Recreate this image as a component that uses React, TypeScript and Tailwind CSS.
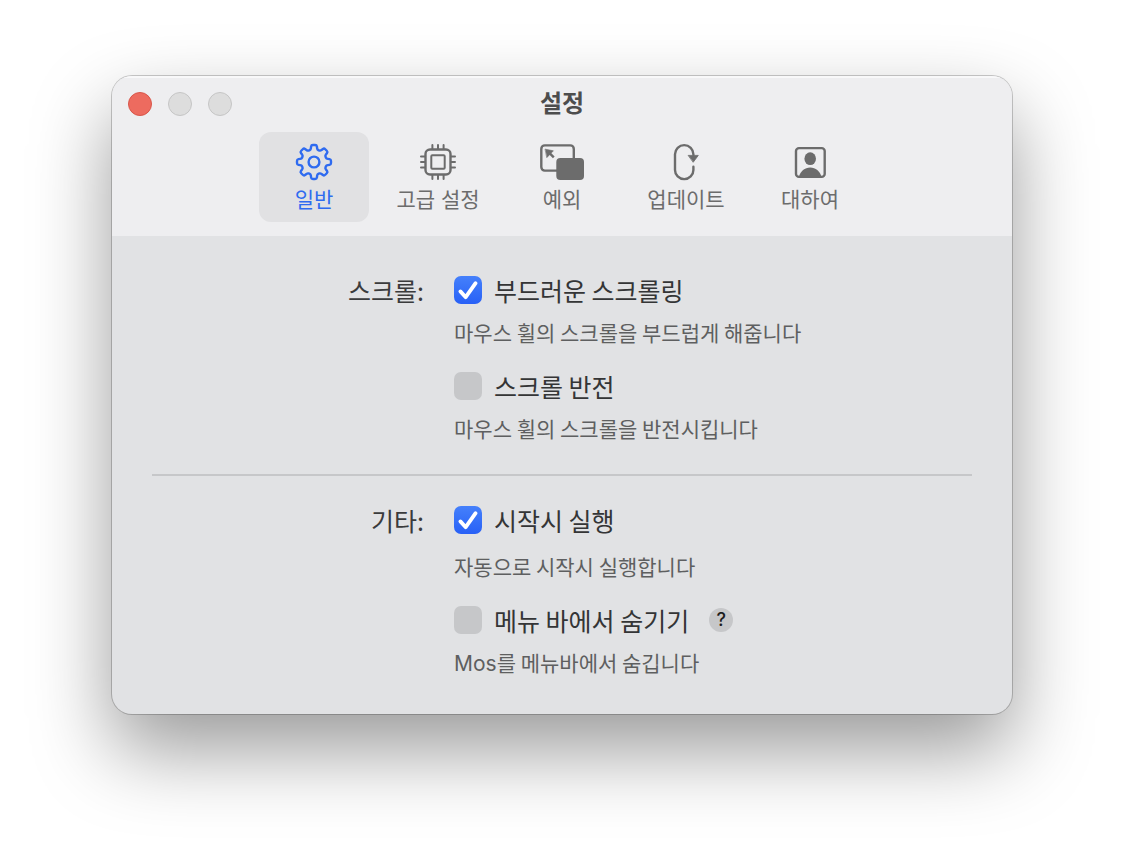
import { useState, type ReactNode } from "react";

// Outline of an eight-tooth gear with softened corners
function gearPath(cx: number, cy: number) {
  const points: [number, number][] = [];
  for (let tooth = 0; tooth < 8; tooth++) {
    for (const [radius, offset] of [
      [17.2, -9],
      [17.2, 9],
      [12.8, 15],
      [12.8, 30],
    ]) {
      const angle = ((tooth * 45 + offset - 90) * Math.PI) / 180;
      points.push([
        cx + radius * Math.cos(angle),
        cy + radius * Math.sin(angle),
      ]);
    }
  }
  const mix = (a: [number, number], b: [number, number], t: number) =>
    `${(a[0] + (b[0] - a[0]) * t).toFixed(2)} ${(a[1] + (b[1] - a[1]) * t).toFixed(2)}`;
  const parts = points.map((point, i) => {
    const prev = points[(i + points.length - 1) % points.length];
    const next = points[(i + 1) % points.length];
    return `${i === 0 ? "M" : "L"}${mix(point, prev, 0.3)}Q${point[0].toFixed(2)} ${point[1].toFixed(2)} ${mix(point, next, 0.3)}`;
  });
  return parts.join("") + "Z";
}

function TabIcon({ children }: { children: ReactNode }) {
  return (
    <svg
      className="h-10 w-12"
      viewBox="0 0 48 40"
      fill="none"
      stroke="currentColor"
      strokeWidth="2.4"
      strokeLinecap="round"
      strokeLinejoin="round"
      aria-hidden="true"
    >
      {children}
    </svg>
  );
}

const TABS = [
  {
    id: "general",
    label: "일반",
    icon: (
      <TabIcon>
        <path d={gearPath(24, 20)} />
        <circle cx="24" cy="20" r="5.4" />
      </TabIcon>
    ),
  },
  {
    id: "advanced",
    label: "고급 설정",
    icon: (
      <TabIcon>
        <rect x="11.5" y="7.5" width="25" height="25" rx="4.5" />
        <rect x="17.3" y="13.3" width="13.4" height="13.4" rx="1" strokeWidth="2" />
        <path
          d="M18.4 3v4M24 3v4M29.6 3v4M18.4 33v4M24 33v4M29.6 33v4M7 14.4h4M7 20h4M7 25.6h4M37 14.4h4M37 20h4M37 25.6h4"
          strokeWidth="2"
        />
      </TabIcon>
    ),
  },
  {
    id: "exceptions",
    label: "예외",
    icon: (
      <TabIcon>
        <rect x="3.3" y="3.4" width="32.5" height="25.2" rx="3.5" />
        <rect x="18.3" y="15.9" width="27.7" height="22" rx="4" fill="currentColor" stroke="none" />
        <path d="M7.4 7.2l8 1.6-6.4 6.6z" fill="currentColor" strokeWidth="0.6" />
        <path d="M10.5 10.2l5.3 5.2" strokeLinecap="butt" />
      </TabIcon>
    ),
  },
  {
    id: "update",
    label: "업데이트",
    icon: (
      <TabIcon>
        <path d="M31.4 13v-.7a9.2 9.2 0 0 0-18.4 0v15.6a9.2 9.2 0 0 0 18.4 0v-3.2" />
        <path d="M26.5 13.4h9.8l-4.9 6.6z" fill="currentColor" strokeWidth="0.8" />
      </TabIcon>
    ),
  },
  {
    id: "about",
    label: "대하여",
    icon: (
      <TabIcon>
        <rect x="10" y="6.1" width="28.7" height="28.8" rx="3" />
        <ellipse cx="24.2" cy="16.7" rx="5.8" ry="6.4" fill="currentColor" stroke="none" />
        <path
          d="M12.8 35c1.6-5.6 6-9.4 11.4-9.4s9.8 3.8 11.4 9.4z"
          fill="currentColor"
          stroke="none"
        />
      </TabIcon>
    ),
  },
];

interface OptionProps {
  id: string;
  label: string;
  description: ReactNode;
  defaultChecked?: boolean;
  gap?: string;
  help?: boolean;
}

function Option({
  id,
  label,
  description,
  defaultChecked = false,
  gap = "gap-4",
  help = false,
}: OptionProps) {
  return (
    <div className={`flex flex-col ${gap}`}>
      <div className="flex h-7 items-center">
        <label htmlFor={id} className="flex items-center gap-3">
          <span className="grid h-7 w-7">
            <input
              id={id}
              type="checkbox"
              defaultChecked={defaultChecked}
              className="peer col-start-1 row-start-1 h-7 w-7 appearance-none rounded-[7px] bg-[#c6c7c9] checked:bg-linear-to-b checked:from-[#4580fb] checked:to-[#2860f6]"
            />
            <svg
              className="pointer-events-none col-start-1 row-start-1 hidden h-7 w-7 peer-checked:block"
              viewBox="0 0 28 28"
              fill="none"
              stroke="white"
              strokeWidth="3.8"
              strokeLinecap="round"
              strokeLinejoin="round"
              aria-hidden="true"
            >
              <path d="M6.4 15.4l5.3 5.8L21.6 7.2" />
            </svg>
          </span>
          <span className="text-[25px] leading-7 text-[#343536]">{label}</span>
        </label>
        {help && (
          <button
            type="button"
            aria-label="도움말"
            className="ml-5 flex h-6 w-6 items-center justify-center rounded-full bg-[#c6c7c9] font-['Inter',sans-serif] text-lg leading-6 font-medium text-[#1c1c1c]"
          >
            ?
          </button>
        )}
      </div>
      <p className="h-6 text-[21px] leading-6 text-[#5e5f60]">{description}</p>
    </div>
  );
}

function Section({ title, children }: { title: string; children: ReactNode }) {
  return (
    <section className="grid grid-cols-[272px_1fr] gap-x-[30px]">
      <h2 className="text-right text-[25px] leading-7 text-[#3a3b3c]">{title}</h2>
      <div className="flex flex-col gap-7">{children}</div>
    </section>
  );
}

export default function App() {
  const [active, setActive] = useState("general");

  return (
    <div className="min-h-screen bg-white px-28 pt-[76px] pb-28 font-['Noto_Sans_CJK_KR','Inter',sans-serif]">
      <main className="overflow-hidden rounded-[20px] bg-[#e1e2e4] shadow-[0_0_0_1px_rgba(0,0,0,0.2),0_36px_80px_rgba(0,0,0,0.4)]">
        <header className="bg-[#eeeef0] pb-[14px] font-['Inter','Noto_Sans_CJK_KR',sans-serif] shadow-[inset_0_2px_0_#f8f8f9]">
          {/* Title bar */}
          <div className="grid h-14 grid-cols-[1fr_auto_1fr] items-center px-4">
            <div className="flex gap-4">
              <button
                type="button"
                aria-label="닫기"
                className="h-6 w-6 rounded-full border border-[#d8564a] bg-[#ed6b5f]"
              />
              <button
                type="button"
                aria-label="최소화"
                className="h-6 w-6 rounded-full border border-[#c5c5c5] bg-[#dddddd]"
              />
              <button
                type="button"
                aria-label="확대"
                className="h-6 w-6 rounded-full border border-[#c5c5c5] bg-[#dddddd]"
              />
            </div>
            <h1 className="text-2xl leading-8 font-bold text-[#4d4d4d]">설정</h1>
          </div>

          {/* Toolbar */}
          <nav className="flex justify-center gap-[14px]">
            {TABS.map((tab) => (
              <button
                key={tab.id}
                type="button"
                onClick={() => setActive(tab.id)}
                className={`flex w-[110px] flex-col items-center gap-1.5 rounded-xl pt-2.5 pb-2.5 ${
                  active === tab.id
                    ? "bg-[#e1e1e3] text-[#2f6bf0]"
                    : "text-[#6c6c6c]"
                }`}
              >
                {tab.icon}
                <span className="text-[21px] leading-6">{tab.label}</span>
              </button>
            ))}
          </nav>
        </header>

        {/* Settings */}
        <div className="px-10 py-10">
          <Section title="스크롤:">
            <Option
              id="smooth"
              label="부드러운 스크롤링"
              description="마우스 휠의 스크롤을 부드럽게 해줍니다"
              defaultChecked
            />
            <Option
              id="reverse"
              label="스크롤 반전"
              description="마우스 휠의 스크롤을 반전시킵니다"
            />
          </Section>

          <hr className="mt-[34px] mb-[30px] border-t-2 border-[#c6c7c9]" />

          <Section title="기타:">
            <Option
              id="launch"
              label="시작시 실행"
              description="자동으로 시작시 실행합니다"
              gap="gap-5"
              defaultChecked
            />
            <Option
              id="hide"
              label="메뉴 바에서 숨기기"
              description={
                <>
                  <span className="font-['Inter',sans-serif]">Mos</span>를 메뉴바에서 숨깁니다
                </>
              }
              help
            />
          </Section>
        </div>
      </main>
    </div>
  );
}
